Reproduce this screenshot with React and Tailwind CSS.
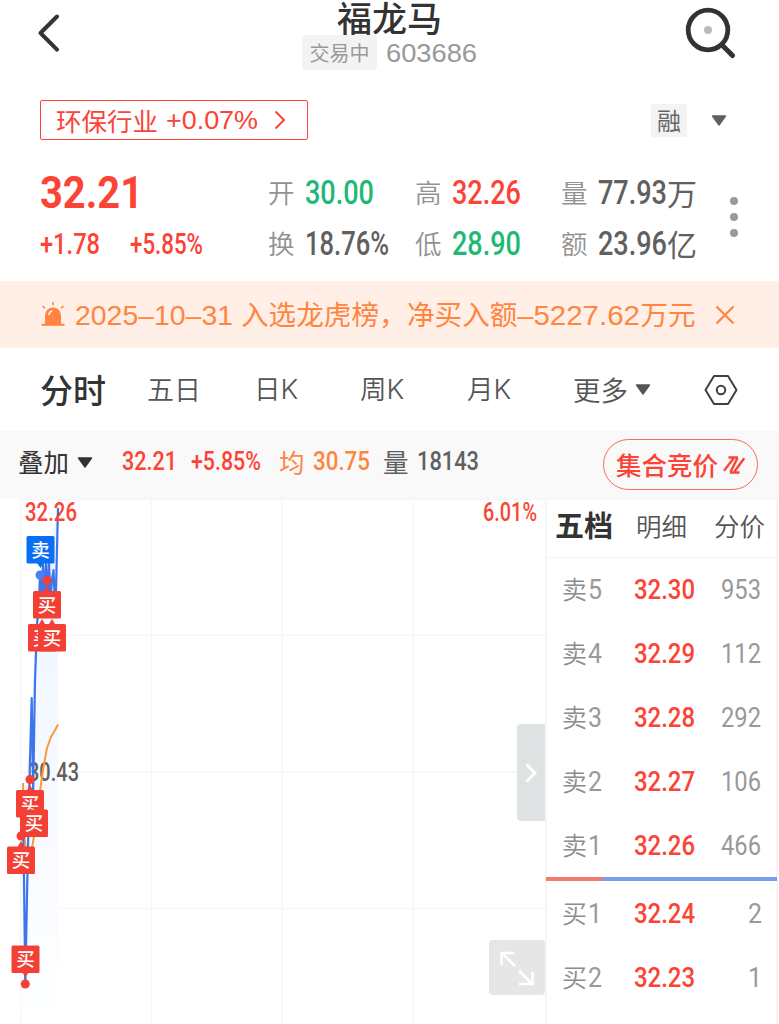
import { useLayoutEffect, useRef } from "react";

/* Text squeezed or stretched to the width of its box. */
function Fit({ className, children }) {
  const box = useRef(null);
  const text = useRef(null);
  useLayoutEffect(() => {
    const el = text.current;
    el.style.transform = "none";
    const natural = el.getBoundingClientRect().width;
    el.style.transform = `scaleX(${box.current.clientWidth / natural})`;
  }, [children]);
  return (
    <span ref={box} className={`block shrink-0 whitespace-nowrap ${className}`}>
      <span ref={text} className="inline-block origin-left">{children}</span>
    </span>
  );
}

const NUM = "font-['Roboto','Noto_Sans_CJK_SC',sans-serif] font-medium";
const SANS = "font-['Liberation_Sans','Noto_Sans_CJK_SC',sans-serif]";
const INTER = "font-['Inter','Noto_Sans_CJK_SC',sans-serif]";

function Caret({ className }) {
  return (
    <svg viewBox="0 0 16 11" className={className}>
      <path d="M1.5 1h13L8 10z" fill="currentColor" stroke="currentColor" strokeWidth="1.4" strokeLinejoin="round" />
    </svg>
  );
}

function Header() {
  return (
    <header className="flex h-[72px] justify-between">
      <svg viewBox="0 0 100 72" className="h-[72px] w-[100px]" fill="none" stroke="#333" strokeWidth="4" strokeLinecap="round" strokeLinejoin="round">
        <path d="M57 16.500L40.500 33L57 49.700" />
      </svg>
      <div className="flex flex-col items-center">
        <h1 className="h-[35px] text-[35px] leading-[34px] font-medium text-[#333]">福龙马</h1>
        <div className="flex h-[35px] items-center gap-[9px]">
          <span className="flex h-[35px] w-[75px] items-center justify-center rounded bg-[#f3f3f3] text-[20px] text-[#999]">交易中</span>
          <Fit className={`${SANS} w-[91px] text-[26.500px] leading-[36px] text-[#999]`}>603686</Fit>
        </div>
      </div>
      <svg viewBox="0 0 100 72" className="h-[72px] w-[100px]" fill="none">
        <circle cx="29" cy="30" r="19.800" stroke="#333" strokeWidth="4.800" />
        <circle cx="29" cy="30" r="4" fill="#bbb" />
        <path d="M44 46l9.500 9.500" stroke="#333" strokeWidth="5" strokeLinecap="round" />
      </svg>
    </header>
  );
}

function Industry() {
  return (
    <div className="flex items-center pt-7 pl-10">
      <div className="flex h-10 w-[268px] items-center rounded-[2px] border-[1.5px] border-[#fb4336] pl-[15px] text-[#fb4336]">
        <span className="w-[110px] text-[25.500px] leading-[36px]">环保行业</span>
        <Fit className={`${SANS} w-[92px] text-[26.500px] leading-[38px]`}>+0.07%</Fit>
        <svg viewBox="0 0 12 20" className="ml-[16px] h-5 w-3" fill="none" stroke="currentColor" strokeWidth="2">
          <path d="M1.500 1.500L10 10L1.500 18.500" />
        </svg>
      </div>
      <span className="ml-[343px] flex h-[33px] w-9 items-center justify-center rounded-[2px] bg-[#f3f3f3] pb-px text-[24px] text-[#666]">融</span>
      <Caret className="ml-[24px] h-[11px] w-4 text-[#606060]" />
    </div>
  );
}

const STATS = [
  ["开", "30.00", "w-[69px]", "text-[#1fb874]"],
  ["高", "32.26", "w-[69px]", "text-[#fb4336]"],
  ["量", "77.93", "w-[69px]", "text-[#606060]", "万"],
  ["换", "18.76%", "w-[84px]", "text-[#606060]"],
  ["低", "28.90", "w-[69px]", "text-[#1fb874]"],
  ["额", "23.96", "w-[69px]", "text-[#606060]", "亿"],
];

function Quote() {
  return (
    <section className="flex h-[141px] pt-[28px] pl-10">
      <div className="w-[228px] text-[#fb4336]">
        <Fit className="w-[103px] font-['Roboto',sans-serif] text-[43.500px] leading-[51px] font-bold">32.21</Fit>
        <div className="flex gap-[30px]">
          <Fit className={`${NUM} w-[60px] text-[29px] leading-[51px]`}>+1.78</Fit>
          <Fit className={`${NUM} w-[73px] text-[29px] leading-[51px]`}>+5.85%</Fit>
        </div>
      </div>
      <div className="grid grid-cols-[147px_146px_150px] grid-rows-[51px_51px]">
        {STATS.map(([label, value, width, color, unit]) => (
          <div key={label} className="flex items-center">
            <span className="w-[37px] pb-[3px] text-[26.500px] font-[350] text-[#929292]">{label}</span>
            <Fit className={`${NUM} ${width} ${color} text-[32.500px] leading-[51px]`}>{value}</Fit>
            {unit && <span className="pb-[3px] text-[30px] text-[#606060]">{unit}</span>}
          </div>
        ))}
      </div>
      <div className="ml-[19px] flex flex-col gap-2 pt-[29px]">
        <i className="size-2 rounded-full bg-[#999]" />
        <i className="size-2 rounded-full bg-[#999]" />
        <i className="size-2 rounded-full bg-[#999]" />
      </div>
    </section>
  );
}

function Banner() {
  return (
    <div className="flex h-[67px] items-center bg-[#ffefe7] pl-[41px] text-[27.600px] leading-[65px] text-[#ff8540]">
      <svg viewBox="0 0 24 25" className="h-[25px] w-6" fill="currentColor">
        <path d="M4 22V13.500a8 8 0 0 1 16 0V22z" />
        <path d="M.5 22.800h23" stroke="currentColor" strokeWidth="2" />
        <path d="M12 0v3M1.500 4.200l2.500 2M22.500 4.200l-2.500 2" stroke="currentColor" strokeWidth="1.600" />
        <path d="M7.800 12.500a5 5 0 0 1 3-3.500" stroke="#ffefe7" strokeWidth="1.600" fill="none" strokeLinecap="round" />
      </svg>
      <Fit className={`${SANS} ml-[10px] w-[158px] text-[28.500px] leading-[68px]`}>2025–10–31</Fit>
      <span className="ml-[8px] w-[166px] shrink-0 pb-0.5 whitespace-nowrap">入选龙虎榜，</span>
      <span className="shrink-0 pb-0.5">净买入额</span>
      <Fit className={`${SANS} w-[123px] text-[28.500px] leading-[68px]`}>–5227.62</Fit>
      <span className="shrink-0 pb-0.5">万元</span>
      <svg viewBox="0 0 20 20" className="ml-[19px] size-5" fill="none" stroke="currentColor" strokeWidth="2.300">
        <path d="M1.500 1.500l17 17M18.500 1.500l-17 17" />
      </svg>
    </div>
  );
}

function Tabs() {
  return (
    <nav className="flex h-[83px] items-center pl-10 text-[26.500px] font-[350] text-[#555]">
      <b className="w-[107px] text-[33px] font-medium text-[#333]">分时</b>
      <span className="w-[107px] text-[27px]">五日</span>
      <span className="w-[106px]">日<span className={`${INTER} text-[27.500px]`}>K</span></span>
      <span className="w-[107px]">周<span className={`${INTER} text-[27.500px]`}>K</span></span>
      <span className="w-[106px]">月<span className={`${INTER} text-[27.500px]`}>K</span></span>
      <span className="w-[62px] text-[27.500px]">更多</span>
      <Caret className="h-[11px] w-4" />
      <svg viewBox="0 0 34 30" className="ml-[53px] h-[30px] w-[34px]" fill="none" stroke="#404040" strokeWidth="2" strokeLinejoin="round">
        <path d="M10 1h14l8.500 14L24 29H10L1.500 15z" />
        <circle cx="17" cy="15" r="4.200" />
      </svg>
    </nav>
  );
}

function Toolbar() {
  return (
    <div className="flex h-[68px] items-start bg-[#f9f9f9] pl-[18px] text-[25.500px] leading-[59px] text-[#606060]">
      <span className="w-[59px] text-[#333]">叠加</span>
      <Caret className="mt-[26px] h-[11px] w-4 text-[#333]" />
      <Fit className={`${NUM} ml-[29px] w-[55px] text-[26px] leading-[61px] text-[#fb4336]`}>32.21</Fit>
      <Fit className={`${NUM} ml-[14px] w-[70px] text-[26px] leading-[61px] text-[#fb4336]`}>+5.85%</Fit>
      <span className="ml-[18px] w-[34px] text-[#ff8540]">均</span>
      <Fit className={`${NUM} w-[57px] text-[26px] leading-[61px] text-[#ff8540]`}>30.75</Fit>
      <span className="ml-[13px] w-[34px]">量</span>
      <Fit className={`${NUM} w-[62px] text-[26px] leading-[61px]`}>18143</Fit>
      <div className="mt-2 ml-[124px] flex h-[51px] w-[155px] items-center rounded-full border-[1.5px] border-[#fb4336]/80 pl-[12px] leading-none font-medium text-[#fb4336]">
        <span className="pb-0.5">集合竞价</span>
        <svg viewBox="0 0 22 18" className="ml-[5px] h-[18px] w-[22px]" fill="none" stroke="currentColor" strokeWidth="2.400">
          <path d="M1 14.800L10.500 2.500M5.500 1.500h9.500M14.500 2L7.500 16M7 16.500h9.500M11.500 15.500L21.300 2.300" />
        </svg>
      </div>
    </div>
  );
}

const MARKS = [
  { x: 26.5, y: 536, c: "#0a6ff5", t: "卖", dot: [40, 575], tip: "M37 563h7l-3.500 5z" },
  { x: 33, y: 591, c: "#f43f34", t: "买", dot: [47, 580.5], tip: "M43.500 592h7l-3.500-6z" },
  { x: 28, y: 624, c: "#f43f34", t: "买", tip: "M38.500 625h7l-3.500-6z" },
  { x: 38, y: 624, c: "#f43f34", t: "买", tip: "M48.500 625h7l-3.500-6z" },
  { x: 16, y: 790, c: "#f43f34", t: "买", dot: [30, 779.5], tip: "M26.500 791h7l-3.500-6z" },
  { x: 20, y: 809.5, c: "#f43f34", t: "买" },
  { x: 7, y: 846.5, c: "#f43f34", t: "买", dot: [21, 836], tip: "M17.500 847h7l-3.500-6z" },
  { x: 11.5, y: 945.5, c: "#f43f34", t: "买", dot: [25.3, 984], tip: "M22 972h7l-3.500 5z" },
];

function Chart() {
  return (
    <div className="relative h-[525px] w-[545px] shrink-0">
      <svg viewBox="0 499 545 525" className="block h-[525px] w-[545px]" fill="none">
        <defs>
          <linearGradient id="area" x1="0" y1="0" x2="0" y2="1">
            <stop offset="0" stopColor="#eaf1ff" />
            <stop offset="1" stopColor="#fdfeff" />
          </linearGradient>
        </defs>
        <path d="M20.500 499V1024M151.500 499V1024M282 499V1024M413.500 499V1024M20 499.500H545M20 635.300H545M20 772H545M20 908.500H545" stroke="#f6f6f6" strokeWidth="1.300" />
        <path d="M22 850L32 700L38 600L58 508V1010H22z" fill="url(#area)" opacity=".8" />
        <text x="28" y="781" fill="#606060" fontFamily="Roboto, sans-serif" fontWeight="500" fontSize="25" textLength="51" lengthAdjust="spacingAndGlyphs">30.43</text>
        <path d="M23 783L24 832L26 850L32 848L35 830L38 806L43 770L47 748L51 737L54 732L58 724.500" stroke="#f89a35" strokeWidth="2" strokeLinejoin="round" />
        <path d="M21 836L23 822L24 880L25.300 984L27.500 870L30 760L31.700 698L33.200 790L35 680L37 625L39 600L40 575L41.500 605L43 564L44.500 600L46 560L47.500 602L49 562L50.500 600L52 580L53.500 570L55 605L56 590L58 508" stroke="#3b76ec" strokeWidth="2.200" strokeLinejoin="round" />
        <g fontFamily="Roboto, sans-serif" fontWeight="500" fontSize="25" fill="#fb4336">
          <text x="25" y="520.500" textLength="52" lengthAdjust="spacingAndGlyphs">32.26</text>
          <text x="483" y="520.500" textLength="54" lengthAdjust="spacingAndGlyphs">6.01%</text>
        </g>
        {MARKS.map((m, i) => (
          <g key={i}>
            {m.dot && <circle cx={m.dot[0]} cy={m.dot[1]} r="4.500" fill={m.t === "卖" ? "#4a80f5" : m.c} />}
            {m.tip && <path d={m.tip} fill={m.c} />}
            <rect x={m.x} y={m.y} width="28" height="27.500" rx="1.500" fill={m.c} />
            <text x={m.x + 14} y={m.y + 20.5} textAnchor="middle" fontSize="18.500" fontWeight="500" fill="#fff">{m.t}</text>
          </g>
        ))}
      </svg>
      <div className="absolute top-[225px] right-0 flex h-[97px] w-7 items-center justify-center rounded-l bg-[#dee2e3]">
        <svg viewBox="0 0 12 20" className="h-5 w-3" fill="none" stroke="#fff" strokeWidth="3">
          <path d="M1.500 1.500L10 10L1.500 18.500" />
        </svg>
      </div>
      <div className="absolute top-[441px] right-0 flex h-[55px] w-14 items-center justify-center rounded bg-[#e6e6e6]">
        <svg viewBox="0 0 36 36" className="size-9" fill="none" stroke="#fff" strokeWidth="2.600">
          <path d="M2.500 15V3H15M3 3L16 16M33.500 22V34H20M33 34L20 20.500" />
        </svg>
      </div>
    </div>
  );
}

const ASKS = [["卖", "5", "32.30", "953"], ["卖", "4", "32.29", "112"], ["卖", "3", "32.28", "292"], ["卖", "2", "32.27", "106"], ["卖", "1", "32.26", "466"]];
const BIDS = [["买", "1", "32.24", "2"], ["买", "2", "32.23", "1"]];
const QTY_WIDTH = { 1: "w-[13.500px]", 3: "w-[40px]" };

function Level({ row: [side, n, price, qty] }) {
  return (
    <div className="flex h-16 items-center pr-[15px] pl-[15px] text-[#999]">
      <span className="w-[26px] pb-0.5 text-[25px] font-[350] text-[#8c8c8c]">{side}</span>
      <Fit className="w-[14px] font-['Roboto',sans-serif] text-[28.500px] leading-[66px]">{n}</Fit>
      <Fit className={`${NUM} mr-auto ml-[32px] w-[61px] text-[28.500px] leading-[66px] text-[#fb4336]`}>{price}</Fit>
      <Fit className={`font-['Roboto',sans-serif] ${QTY_WIDTH[qty.length]} text-[28.500px] leading-[66px]`}>{qty}</Fit>
    </div>
  );
}

function OrderBook() {
  return (
    <aside className="w-[233px] border-x-2 border-t border-[#f6f6f6]">
      <div className="flex h-[58px] items-center border-b border-[#f2f2f2] pb-[7px] pl-2 text-[25.500px] font-[350] whitespace-nowrap text-[#555]">
        <b className="w-[81px] text-[29px] font-bold text-[#333]">五档</b>
        <span className="w-[78px]">明细</span>
        <span>分价</span>
      </div>
      {ASKS.map((r) => <Level key={r[2]} row={r} />)}
      <div className="-mx-px -mt-px mb-px flex h-1">
        <i className="w-[57px] bg-[#f07c72]" />
        <i className="flex-1 bg-[#7b9ce8]" />
      </div>
      {BIDS.map((r) => <Level key={r[2]} row={r} />)}
    </aside>
  );
}

export default function App() {
  return (
    <main className="h-[1024px] w-[779px] overflow-hidden bg-white font-['Noto_Sans_CJK_SC',sans-serif]">
      <Header />
      <Industry />
      <Quote />
      <Banner />
      <Tabs />
      <Toolbar />
      <div className="flex">
        <Chart />
        <OrderBook />
      </div>
    </main>
  );
}
